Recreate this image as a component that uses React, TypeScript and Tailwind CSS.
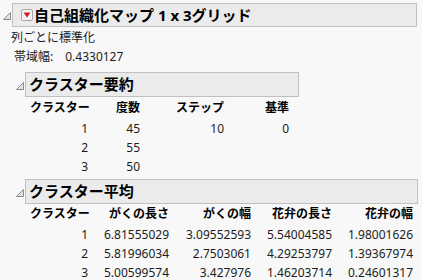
import React from "react";

function Disclosure({ cls }: { cls: string }) {
  return (
    <svg width="8" height="8" viewBox="0 0 8 8" className={`shrink-0 block ${cls}`}>
      <polygon points="7.5,0.5 7.5,7.5 0.5,7.5" fill="#e4e4e4" stroke="#8a8a8a" strokeWidth="1" />
    </svg>
  );
}

function RedMenu() {
  return (
    <div className="w-[12px] h-[12px] shrink-0 rounded-[2px] border border-[#a8a8a8] bg-[#f4f4f4] flex items-center justify-center">
      <svg width="8" height="6" viewBox="0 0 8 6" className="block">
        <polygon points="0.5,0.5 7.5,0.5 4,5.5" fill="#d42020" />
      </svg>
    </div>
  );
}

function SectionHeader({ title, width }: { title: string; width: string }) {
  return (
    <div className="flex items-start pl-[16px]">
      <Disclosure cls="mt-[10px]" />
      <div className={`${width} ml-[1px] shrink-0 h-[25px] border border-[#c0c0c0] bg-[#ebebeb] flex items-center pl-[3px]`}>
        <span className="text-[15px] font-bold text-black leading-none">{title}</span>
      </div>
    </div>
  );
}

const t1Widths = ["w-[58px]", "w-[52px]", "w-[84px]", "w-[65px]"];
const t2Widths = ["w-[58px]", "w-[81px]", "w-[82px]", "w-[81px]", "w-[81px]"];

function Row({ cells, widths, bold, h }: { cells: string[]; widths: string[]; bold?: boolean; h: string }) {
  return (
    <div className={`flex items-center ${h} pl-[30px]`}>
      {cells.map((c, i) => (
        <div
          key={i}
          className={`${widths[i]} shrink-0 whitespace-nowrap text-[12px] leading-none ${bold ? "font-bold text-black" : "text-[#1c1c1c]"} ${
            bold && i === 0 ? "text-left" : "text-right"
          }`}
        >
          {c}
        </div>
      ))}
    </div>
  );
}

export default function App() {
  return (
    <div className="w-[422px] h-[280px] overflow-hidden bg-[#f8f8f8] font-['Noto_Sans','Noto_Sans_CJK_JP',sans-serif] text-black">
      {/* Title */}
      <div className="flex items-start pt-[3px] pl-[3px]">
        <Disclosure cls="mt-[9px]" />
        <div className="w-[405px] ml-[1px] shrink-0 h-[24px] border border-[#c0c0c0] bg-[#ebebeb] flex items-center pl-[8px] gap-[1px]">
          <RedMenu />
          <span className="text-[15px] font-bold leading-none whitespace-pre">自己組織化マップ 1 x 3グリッド</span>
        </div>
      </div>
      <div className="h-[20px] flex items-center pl-[11px] pt-[2px] text-[12px] leading-none text-[#1c1c1c]">列ごとに標準化</div>
      <div className="h-[20px] flex items-center pl-[14px] text-[12px] leading-none text-[#1c1c1c]">
        <span>帯域幅:</span>
        <span className="ml-[12px]">0.4330127</span>
      </div>
      <div className="mt-[5px]">
        <SectionHeader title="クラスター要約" width="w-[274px]" />
      </div>
      <div className="h-[2px]" />
      <Row cells={["クラスター", "度数", "ステップ", "基準"]} widths={t1Widths} bold h="h-[18px]" />
      <div className="h-[2px]" />
      <Row cells={["1", "45", "10", "0"]} widths={t1Widths} h="h-[19px]" />
      <Row cells={["2", "55", "", ""]} widths={t1Widths} h="h-[19px]" />
      <Row cells={["3", "50", "", ""]} widths={t1Widths} h="h-[19px]" />
      <div className="mt-[3px]">
        <SectionHeader title="クラスター平均" width="w-[393px]" />
      </div>
      <div className="h-[1px]" />
      <Row cells={["クラスター", "がくの長さ", "がくの幅", "花弁の長さ", "花弁の幅"]} widths={t2Widths} bold h="h-[18px]" />
      <div className="h-[2px]" />
      <Row cells={["1", "6.81555029", "3.09552593", "5.54004585", "1.98001626"]} widths={t2Widths} h="h-[19px]" />
      <Row cells={["2", "5.81996034", "2.7503061", "4.29253797", "1.39367974"]} widths={t2Widths} h="h-[19px]" />
      <Row cells={["3", "5.00599574", "3.427976", "1.46203714", "0.24601317"]} widths={t2Widths} h="h-[19px]" />
    </div>
  );
}
